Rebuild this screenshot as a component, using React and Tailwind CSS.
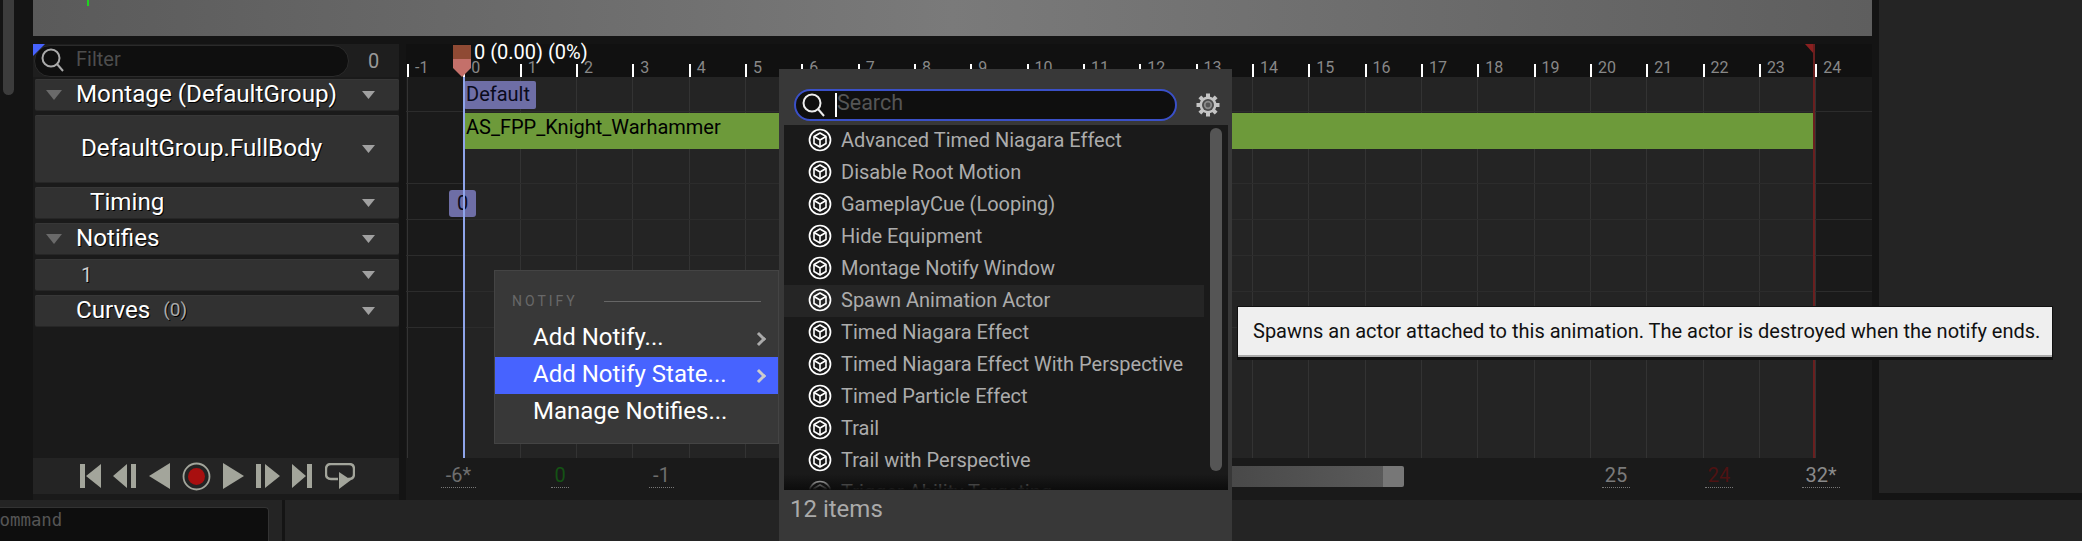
import React from 'react';

const rulerTicks = Array.from({ length: 26 }, (_, i) => i - 1);

const notifyStates = [
    'Advanced Timed Niagara Effect',
    'Disable Root Motion',
    'GameplayCue (Looping)',
    'Hide Equipment',
    'Montage Notify Window',
    'Spawn Animation Actor',
    'Timed Niagara Effect',
    'Timed Niagara Effect With Perspective',
    'Timed Particle Effect',
    'Trail',
    'Trail with Perspective',
    'Trigger Ability Targeting',
];

function SearchIcon({ color = '#aaa' }) {
    return (
        <svg width="24" height="26" viewBox="0 0 24 26" fill="none" stroke={color} strokeWidth="2">
            <circle cx="11" cy="11" r="8.5" />
            <path d="M17 17l6 7" />
        </svg>
    );
}

function Caret({ left = false }) {
    return left ? (
        <svg width="16" height="10" viewBox="0 0 16 10"><path d="M0 0h16l-8 10z" fill="#6a6a6a" /></svg>
    ) : (
        <svg width="13" height="8" viewBox="0 0 13 8"><path d="M0 0h13l-6.5 8z" fill="#a0a0a0" /></svg>
    );
}

function TrackRow({ height, pl, leftCaret, children }) {
    return (
        <div className={`flex items-center rounded-[2px] bg-[#313131] border-b border-[#262626] shadow-[inset_0_1px_0_#373737] ${height}`}>
            <div className="w-[41px] pl-[11px] shrink-0">{leftCaret && <Caret left />}</div>
            <div className={`flex-1 flex items-center text-[24.2px] text-white [text-shadow:1px_1px_0_#000] ${pl}`}>{children}</div>
            <div className="w-[37px] shrink-0"><Caret /></div>
        </div>
    );
}

function CubeIcon() {
    return (
        <svg width="24" height="24" viewBox="0 0 24 24" fill="none" className="shrink-0 -mt-[2px]">
            <circle cx="12" cy="12" r="10.5" stroke="#fff" strokeWidth="1.7" />
            <path d="M12 5l6 3.5v7L12 19l-6-3.5v-7z" stroke="#fff" strokeWidth="1.6" strokeLinejoin="round" />
            <path d="M6 8.5l6 3.5 6-3.5M12 12v7" stroke="#fff" strokeWidth="1.6" />
        </svg>
    );
}

function GearIcon() {
    const teeth = [0, 45, 90, 135];
    return (
        <svg width="24" height="26" viewBox="0 0 24 26">
            {teeth.map((a) => (
                <rect key={a} x="10" y="1.5" width="4" height="23" fill="#c4c4c4" transform={`rotate(${a} 12 13)`} />
            ))}
            <circle cx="12" cy="13" r="8.5" fill="#c4c4c4" />
            <circle cx="12" cy="13" r="6" fill="#4a4a4a" />
            <circle cx="12" cy="13" r="4.2" fill="#8a8a8a" />
            <circle cx="12" cy="13" r="2.4" fill="#555" />
        </svg>
    );
}

function Transport() {
    const c = '#a3a59b';
    return (
        <div className="h-[36px] bg-[#242424] flex items-center pl-[47px] gap-[12px]">
            <svg width="21" height="24" viewBox="0 0 21 24"><path d="M0 0h5v24H0zM21 0v24L6 12z" fill={c} /></svg>
            <svg width="24" height="24" viewBox="0 0 24 24"><path d="M14 0v24L0 12zM18 0h5v24h-5z" fill={c} /></svg>
            <svg width="21" height="26" viewBox="0 0 21 26"><path d="M21 0v26L0 13z" fill={c} /></svg>
            <svg width="29" height="29" viewBox="0 0 29 29">
                <circle cx="14.5" cy="14.5" r="13" fill="none" stroke={c} strokeWidth="1.8" />
                <circle cx="14.5" cy="14.5" r="8.5" fill="#a80f0f" />
            </svg>
            <svg width="21" height="26" viewBox="0 0 21 26"><path d="M0 0v26l21-13z" fill={c} /></svg>
            <svg width="24" height="24" viewBox="0 0 24 24"><path d="M0 0h5v24H0zM9 0v24l15-12z" fill={c} /></svg>
            <svg width="21" height="24" viewBox="0 0 21 24"><path d="M0 0v24l14-12zM15 0h5v24h-5z" fill={c} /></svg>
            <svg width="30" height="26" viewBox="0 0 30 26" fill="none">
                <path d="M13 16H6q-5 0-5-5V6q0-5 5-5h18q5 0 5 5v5q0 5-5 5h-1" stroke={c} strokeWidth="2.4" />
                <path d="M14 9l12 8-12 9z" fill={c} />
            </svg>
        </div>
    );
}

function FrameValue({ label, color, ml, width }) {
    return (
        <div className={`flex flex-col items-center shrink-0 ${ml} ${width}`}>
            <span className={`text-[20px] leading-[20px] ${color}`}>{label}</span>
            <span className="mt-[2px] w-full border-b border-dotted border-[#777]" />
        </div>
    );
}

function NotifyMenu() {
    return (
        <div className="absolute left-[494px] top-[270px] w-[285px] h-[174px] bg-[#383838] border border-[#444] pt-[20px] text-white">
            <div className="flex items-center pl-[17px] h-[20px]">
                <span className="w-[92px] text-[14px] tracking-[3px] text-[#686868]">NOTIFY</span>
                <span className="w-[157px] border-t border-[#666]" />
            </div>
            <div className="mt-[9px] h-[37px] flex items-center pl-[38px] pr-[14px] justify-between text-[24px]">
                <span className="-mt-[3px]">Add Notify...</span>
                <span className="w-[10px] h-[10px] border-t-[3px] border-r-[3px] border-[#aaa] rotate-45" />
            </div>
            <div className="h-[37px] flex items-center pl-[38px] pr-[14px] justify-between text-[24px] bg-[#4763ff]">
                <span className="-mt-[3px]">Add Notify State...</span>
                <span className="w-[10px] h-[10px] border-t-[3px] border-r-[3px] border-[#ccc] rotate-45" />
            </div>
            <div className="h-[37px] flex items-center pl-[38px] text-[24px]">
                <span className="-mt-[3px]">Manage Notifies...</span>
            </div>
        </div>
    );
}

function NotifyPicker() {
    return (
        <div className="absolute left-[779px] top-[69px] w-[453px] h-[472px] bg-[#383838] flex flex-col">
            <div className="mt-[20px] ml-[15px] flex items-center h-[32px]">
                <div className="w-[383px] h-[32px] rounded-full bg-[#0f0f0f] border-2 border-[#3a50c8] flex items-center pl-[5px]">
                    <SearchIcon color="#eee" />
                    <span className="ml-[10px] w-[2px] h-[24px] bg-white" />
                    <span className="-mt-[3px] text-[21.5px] text-[#555]">Search</span>
                </div>
                <div className="ml-[19px]"><GearIcon /></div>
            </div>
            <div className="relative mt-[4px] ml-[5px] w-[444px] h-[365px] bg-[#1a1a1a] overflow-hidden">
                {notifyStates.map((name, i) => (
                    <div key={name} className={`w-[420px] h-[32px] flex items-center pl-[24px] gap-[9px] text-[20px] text-[#acacac] ${i === 5 ? 'bg-[#252525]' : ''}`}>
                        <CubeIcon />
                        <span className="-mt-[2px]">{name}</span>
                    </div>
                ))}
                <div className="absolute left-[426px] top-[3px] w-[12px] h-[343px] rounded-full bg-[#555]" />
                <div className="absolute left-0 right-0 bottom-0 h-[16px] bg-gradient-to-b from-transparent to-[#0c0c0c]" />
            </div>
            <div className="pl-[11px] pt-[1px] text-[24px] text-[#aaa]">12 items</div>
        </div>
    );
}

export default function App() {
    return (
        <div className="relative w-[2082px] h-[541px] overflow-hidden bg-[#141414] font-['Roboto',sans-serif]">
            <div className="flex h-[500px]">
                {/* left strip */}
                <div className="w-[33px] shrink-0 pl-[3px]">
                    <div className="w-[11px] h-[95px] rounded-b-full bg-[#3c3c3c]" />
                </div>

                <div className="w-[1839px] shrink-0 flex flex-col">
                    <div className="relative h-[36px] bg-gradient-to-r from-[#5a5a5a] via-[#7a7a7a] to-[#5e5e5e]">
                        <div className="absolute left-[54px] top-0 w-[2px] h-[6px] bg-[#1fd41f]" />
                    </div>

                    <div className="mt-[8px] flex flex-1">
                        {/* track list */}
                        <div className="w-[366px] shrink-0 flex flex-col bg-[#1a1a1a]">
                            <div className="relative h-[33px] flex items-center bg-[#1e1e1e]">
                                <div className="absolute left-0 top-0 w-0 h-0 border-t-[12px] border-r-[12px] border-t-[#4763ff] border-r-transparent" />
                                <div className="w-[315px] h-[32px] ml-[1px] rounded-full bg-[#0f0f0f] border border-[#2b2b2b] flex items-center pl-[5px]">
                                    <span className="-mt-[2px]"><SearchIcon /></span>
                                    <span className="-mt-[3px] ml-[12px] text-[20px] text-[#4d4d4d]">Filter</span>
                                </div>
                                <span className="ml-[19px] text-[20px] text-[#999]">0</span>
                            </div>
                            <div className="mt-[2px] ml-[2px] flex flex-col gap-[4px]">
                                <TrackRow height="h-[32px]" leftCaret>Montage (DefaultGroup)</TrackRow>
                                <TrackRow height="h-[68px]" pl="pl-[5px]">DefaultGroup.FullBody</TrackRow>
                                <TrackRow height="h-[32px]" pl="pl-[14px]">Timing</TrackRow>
                                <TrackRow height="h-[32px]" leftCaret>Notifies</TrackRow>
                                <TrackRow height="h-[32px]" pl="pl-[5px]"><span className="text-[20px] text-[#ccc]">1</span></TrackRow>
                                <TrackRow height="h-[32px]">
                                    Curves
                                    <span className="ml-[13px] text-[19px] text-[#aaa]">(0)</span>
                                </TrackRow>
                            </div>
                            <div className="mt-auto mb-[6px]"><Transport /></div>
                        </div>

                        {/* timeline */}
                        <div className="ml-[7px] flex-1 min-w-0 flex flex-col bg-[#1a1a1a]">
                            <div className="relative h-[33px] bg-[#111] flex items-end pl-[1px]">
                                {rulerTicks.map((n) => (
                                    <div key={n} className="w-[56.33px] shrink-0 flex items-end">
                                        <span className="w-[2px] h-[13px] bg-white" />
                                        <span className="ml-[6px] text-[16px] leading-[18px] text-[#888]">{n}</span>
                                    </div>
                                ))}
                                <span className="absolute left-[68px] top-[-3px] text-[20px] leading-[22px] text-white">0 (0.00) (0%)</span>
                                <svg className="absolute left-[47px] top-[1px]" width="18" height="32" viewBox="0 0 18 32">
                                    <path d="M0 0h18v14H0z" fill="#8f4a34" />
                                    <path d="M0 14h18v9l-9 9-9-9z" fill="#c4706a" />
                                </svg>
                                <svg className="absolute left-[1399px] top-0" width="9" height="10" viewBox="0 0 9 10">
                                    <path d="M0 0h9v10z" fill="#8a2020" />
                                </svg>
                            </div>

                            <div className="relative h-[381px]">
                                <div className="absolute left-[57px] top-0 bottom-0 w-[1351px] bg-[#242424]" />
                                <div className="absolute inset-0 flex pl-[1px]">
                                    {rulerTicks.map((n) => (
                                        <div key={n} className="w-[56.33px] shrink-0 border-l border-[#333]" />
                                    ))}
                                </div>
                                <div className="relative">
                                    <div className="h-[35px] border-b border-[#2c2c2c] pl-[58px] pt-[4px]">
                                        <div className="w-[72px] h-[28px] rounded-[2px] bg-[#6e6ea6] pl-[2px] text-[20px] leading-[26px] text-[#0a0a1a]">Default</div>
                                    </div>
                                    <div className="h-[72px] border-b border-[#2c2c2c] pl-[58px] pt-[1px]">
                                        <div className="w-[1351px] h-[36px] bg-[#6d9a3a] pl-[2px] text-[20px] leading-[28px] text-black">AS_FPP_Knight_Warhammer</div>
                                    </div>
                                    <div className="h-[36px] border-b border-[#2c2c2c] pl-[43px] pt-[6px]">
                                        <div className="w-[27px] h-[27px] rounded-[3px] bg-[#6e6ea6] text-center text-[20px] leading-[26px] text-[#0a0a1a]">0</div>
                                    </div>
                                    <div className="h-[36px] border-b border-[#2c2c2c]" />
                                    <div className="h-[36px] border-b border-[#2c2c2c]" />
                                    <div className="h-[36px] border-b border-[#2c2c2c]" />
                                </div>
                                <div className="absolute left-[57px] top-0 bottom-0 w-[2px] bg-[#8ea4ea]" />
                                <div className="absolute left-[1407px] top-[-33px] bottom-0 w-[2px] bg-[#6a1f1f]" />
                            </div>

                            <div className="relative flex-1 flex items-start pt-[7px]">
                                <FrameValue label="-6*" color="text-[#6e6e6e]" ml="ml-[35px]" width="w-[35px]" />
                                <FrameValue label="0" color="text-[#145214]" ml="ml-[75px]" width="w-[18px]" />
                                <FrameValue label="-1" color="text-[#6e6e6e]" ml="ml-[80px]" width="w-[25px]" />
                                <div className="ml-[497px] w-[15px] h-[21px] mt-[1px] bg-[#444]" />
                                <div className="w-[197px] h-[21px] mt-[1px] bg-gradient-to-r from-[#444] to-[#5a5a5a]" />
                                <div className="w-[21px] h-[21px] mt-[1px] rounded-r-[2px] bg-[#777]" />
                                <FrameValue label="25" color="text-[#7a7a7a]" ml="ml-[198px]" width="w-[28px]" />
                                <FrameValue label="24" color="text-[#4e1212]" ml="ml-[75px]" width="w-[28px]" />
                                <FrameValue label="32*" color="text-[#8a8a8a]" ml="ml-[69px]" width="w-[38px]" />
                            </div>
                        </div>
                    </div>
                </div>

                <div className="ml-[7px] flex-1 h-[493px] bg-[#242424]" />
            </div>

            {/* console bar */}
            <div className="h-[41px] bg-[#242424] flex">
                <div className="w-[282px] shrink-0 pt-[7px]">
                    <div className="w-[269px] h-[34px] bg-[#0e0e0e] border-t border-r border-[#333] rounded-tr-[4px] overflow-hidden pl-[1px] font-['DejaVu_Sans_Mono',monospace] text-[17.4px] leading-[25px] text-[#555]">
                        <span className="block -ml-[12px]">Command</span>
                    </div>
                </div>
                <div className="w-[3px] bg-[#141414]" />
            </div>

            <NotifyMenu />
            <NotifyPicker />

            {/* tooltip */}
            <div className="absolute left-[1237px] top-[306px] w-[816px] h-[54px] bg-[#efefef] border border-[#111] border-b-[3px] shadow-[inset_0_-2px_0_#aaa] flex items-center pl-[15px] text-[20px] text-[#111]">
                <span className="-mt-[2px]">Spawns an actor attached to this animation. The actor is destroyed when the notify ends.</span>
            </div>
        </div>
    );
}
